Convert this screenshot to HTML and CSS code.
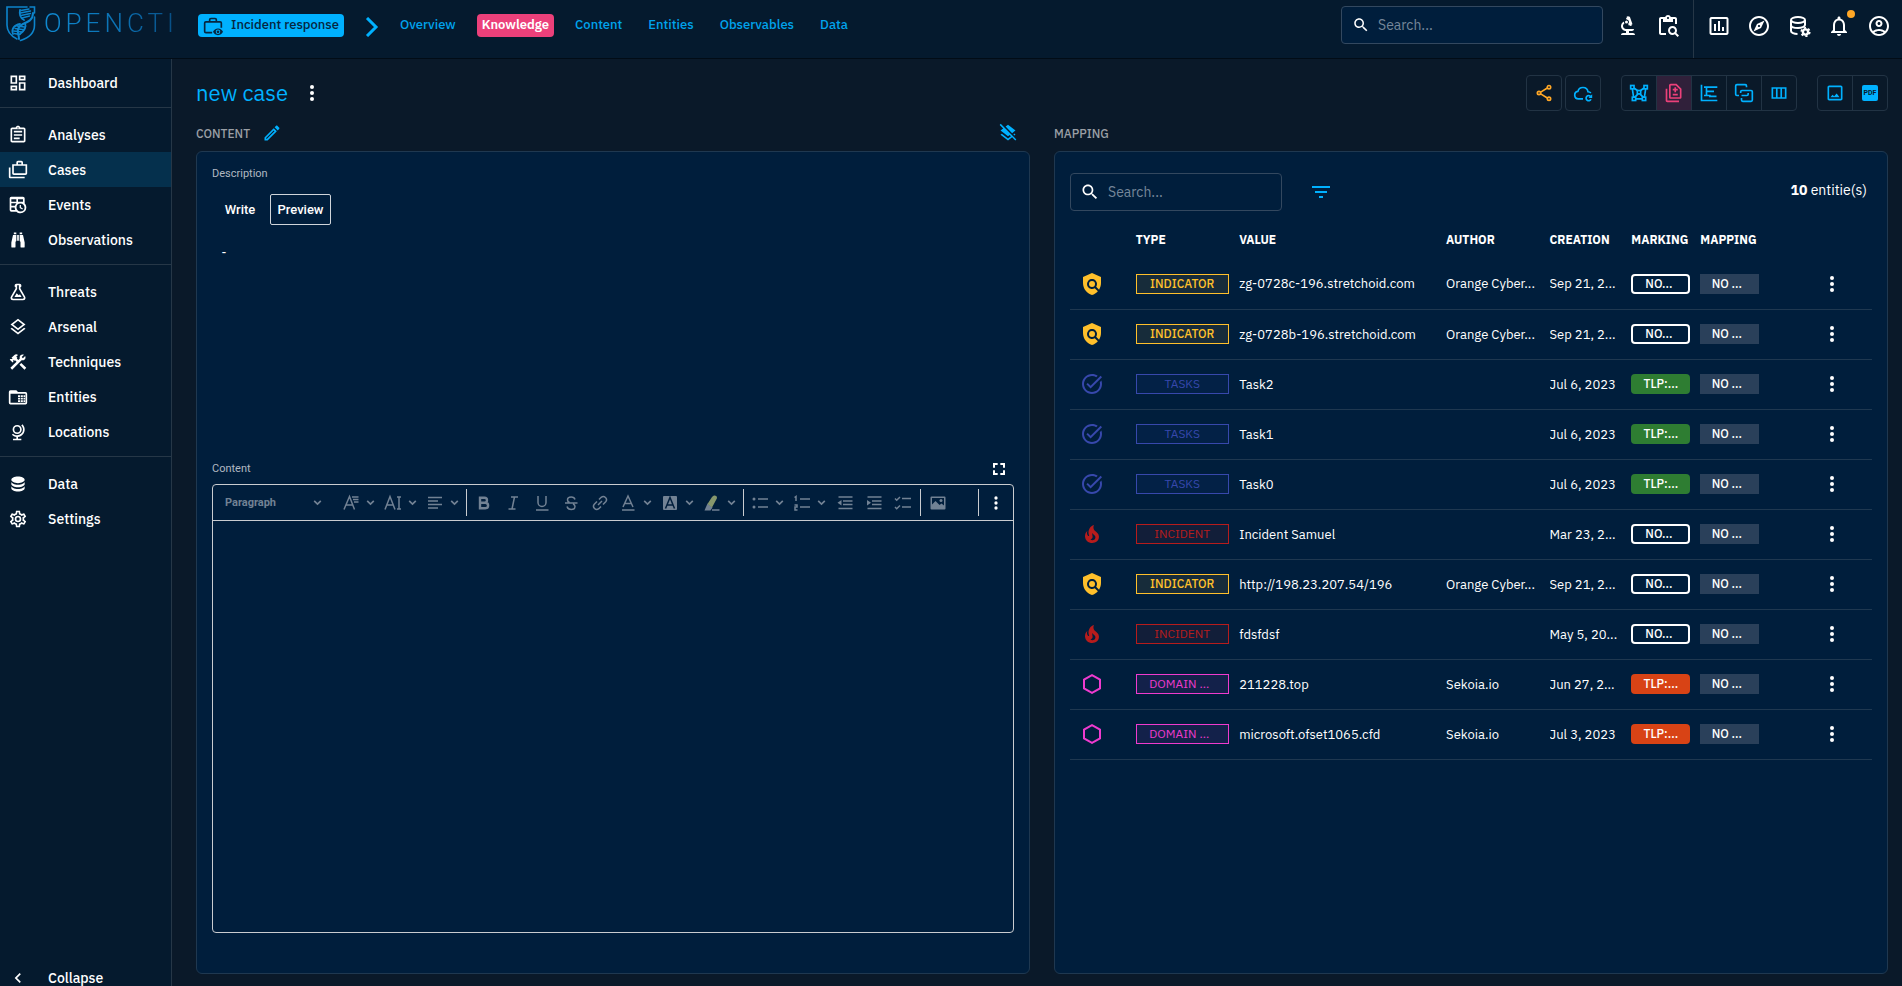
FILE: index.html
```html
<!DOCTYPE html>
<html lang="en">
<head>
<meta charset="utf-8">
<title>new case - OpenCTI</title>
<link rel="stylesheet" href="styles.css">
</head>
<body>
<svg class="sprite" aria-hidden="true">
  <symbol id="dashboard" viewBox="0 0 24 24"><path d="M19 5v2h-4V5h4M9 5v6H5V5h4m10 8v6h-4v-6h4M9 17v2H5v-2h4M21 3h-8v6h8V3zM11 3H3v10h8V3zm10 8h-8v10h8V11zm-10 4H3v6h8v-6z"/></symbol>
  <symbol id="assignment" viewBox="0 0 24 24"><path d="M7 15h7v2H7zm0-4h10v2H7zm0-4h10v2H7z"/><path d="M19 3h-4.18C14.4 1.84 13.3 1 12 1c-1.3 0-2.4.84-2.82 2H5c-1.1 0-2 .9-2 2v14c0 1.1.9 2 2 2h14c1.1 0 2-.9 2-2V5c0-1.1-.9-2-2-2zm-7-.25c.41 0 .75.34.75.75s-.34.75-.75.75-.75-.34-.75-.75.34-.75.75-.75zM19 19H5V5h14v14z"/></symbol>
  <symbol id="cases" viewBox="0 0 24 24"><path d="M3 9H1v11c0 1.11.89 2 2 2h17v-2H3V9z"/><path d="M18 5V3c0-1.1-.9-2-2-2h-4c-1.1 0-2 .9-2 2v2H5v11c0 1.1.9 2 2 2h14c1.1 0 2-.9 2-2V5h-5zm-6-2h4v2h-4V3zm9 13H7V7h14v9z"/></symbol>
  <symbol id="timetable" viewBox="0 0 24 24"><path d="M14,12H15.5V14.82L17.94,16.23L17.19,17.53L14,15.69V12M4,2H18A2,2 0 0,1 20,4V10.1C21.24,11.36 22,13.09 22,15A7,7 0 0,1 15,22C13.09,22 11.36,21.24 10.1,20H4A2,2 0 0,1 2,18V4A2,2 0 0,1 4,2M4,15V18H8.67C8.24,17.09 8,16.07 8,15H4M4,8H10V5H4V8M18,8V5H12V8H18M4,13H8.29C8.63,11.85 9.26,10.82 10.1,10H4V13M15,10.15A4.85,4.85 0 0,0 10.15,15C10.15,17.68 12.32,19.85 15,19.85A4.85,4.85 0 0,0 19.85,15C19.85,12.32 17.68,10.15 15,10.15Z"/></symbol>
  <symbol id="binoculars" viewBox="0 0 24 24"><path d="M11,6H13V13H11V6M9,20A1,1 0 0,1 8,21H5A1,1 0 0,1 4,20V15L6,6H10V13A1,1 0 0,1 9,14V20M10,5H7V3H10V5M15,20V14A1,1 0 0,1 14,13V6H18L20,15V20A1,1 0 0,1 19,21H16A1,1 0 0,1 15,20M14,5V3H17V5H14Z"/></symbol>
  <symbol id="flask" viewBox="0 0 24 24"><path d="M5,19A1,1 0 0,0 6,20H18A1,1 0 0,0 19,19C19,18.79 18.93,18.59 18.82,18.43L13,8.35V4H11V8.35L5.18,18.43C5.07,18.59 5,18.79 5,19M6,22A3,3 0 0,1 3,19C3,18.4 3.18,17.84 3.5,17.37L9,7.81V6A1,1 0 0,1 8,5V4A2,2 0 0,1 10,2H14A2,2 0 0,1 16,4V5A1,1 0 0,1 15,6V7.81L20.5,17.37C20.82,17.84 21,18.4 21,19A3,3 0 0,1 18,22H6M13,16L14.34,14.66L16.27,18H7.73L10.39,13.39L13,16Z"/></symbol>
  <symbol id="layers" viewBox="0 0 24 24"><path d="M11.99 18.54l-7.37-5.73L3 14.07l9 7 9-7-1.63-1.27zM12 16l7.36-5.73L21 9l-9-7-9 7 1.63 1.27L12 16zm0-11.47L17.74 9 12 13.47 6.26 9 12 4.53z"/></symbol>
  <symbol id="tools" viewBox="0 0 24 24"><path d="M13.783 15.172l2.121-2.121 5.996 5.996-2.121 2.121zM17.5 10c1.93 0 3.5-1.57 3.5-3.5 0-.58-.16-1.12-.41-1.6l-2.7 2.7-1.49-1.49 2.7-2.7c-.48-.25-1.02-.41-1.6-.41C15.57 3 14 4.57 14 6.5c0 .41.08.8.21 1.16l-1.85 1.85-1.78-1.78.71-.71-1.41-1.41L12 3.49c-1.17-1.17-3.07-1.17-4.24 0L4.22 7.03l1.41 1.41H2.81l-.71.71 3.54 3.54.71-.71V9.15l1.41 1.41.71-.71 1.78 1.78-7.41 7.41 2.12 2.12L16.34 9.79c.36.13.75.21 1.16.21z"/></symbol>
  <symbol id="folder-table" viewBox="0 0 24 24"><path fill-rule="evenodd" d="M10 4H3a2 2 0 0 0-2 2v13a2 2 0 0 0 2 2h18a2 2 0 0 0 2-2V8a2 2 0 0 0-2-2h-9zM3 8h18v11H3z"/><path d="M12 10h2.500v2H12zM15.300 10h2.500v2h-2.500zM18.600 10h2v2h-2zM12 13h2.500v2H12zM15.300 13h2.500v2h-2.500zM18.600 13h2v2h-2zM12 16h2.500v2H12zM15.300 16h2.500v2h-2.500zM18.600 16h2v2h-2z"/></symbol>
  <symbol id="globe" viewBox="0 0 24 24"><path d="M17.36,2.64L15.95,4.06C17.26,5.37 18,7.14 18,9A7,7 0 0,1 11,16C9.15,16 7.37,15.26 6.06,13.95L4.64,15.36C6.08,16.8 7.97,17.71 10,17.93V20H6V22H16V20H12V17.94C16.55,17.43 20,13.58 20,9C20,6.62 19.05,4.33 17.36,2.64M11,3.5A5.5,5.5 0 0,0 5.5,9A5.5,5.5 0 0,0 11,14.5A5.5,5.5 0 0,0 16.5,9A5.5,5.5 0 0,0 11,3.5M11,5.5C12.94,5.5 14.5,7.07 14.5,9A3.5,3.5 0 0,1 11,12.5A3.5,3.5 0 0,1 7.5,9A3.5,3.5 0 0,1 11,5.5Z"/></symbol>
  <symbol id="database" viewBox="0 0 24 24"><path d="M12,3C7.58,3 4,4.79 4,7C4,9.21 7.58,11 12,11C16.42,11 20,9.21 20,7C20,4.79 16.42,3 12,3M4,9V12C4,14.21 7.58,16 12,16C16.42,16 20,14.21 20,12V9C20,11.21 16.42,13 12,13C7.58,13 4,11.21 4,9M4,14V17C4,19.21 7.58,21 12,21C16.42,21 20,19.21 20,17V14C20,16.21 16.42,18 12,18C7.58,18 4,16.21 4,14Z"/></symbol>
  <symbol id="cog" viewBox="0 0 24 24"><path d="M12,8A4,4 0 0,1 16,12A4,4 0 0,1 12,16A4,4 0 0,1 8,12A4,4 0 0,1 12,8M12,10A2,2 0 0,0 10,12A2,2 0 0,0 12,14A2,2 0 0,0 14,12A2,2 0 0,0 12,10M10,22C9.75,22 9.54,21.82 9.5,21.58L9.13,18.93C8.5,18.68 7.96,18.34 7.44,17.94L4.95,18.95C4.73,19.03 4.46,18.95 4.34,18.73L2.34,15.27C2.21,15.05 2.27,14.78 2.46,14.63L4.57,12.97L4.5,12L4.57,11L2.46,9.37C2.27,9.22 2.21,8.95 2.34,8.73L4.34,5.27C4.46,5.05 4.73,4.96 4.95,5.05L7.44,6.05C7.96,5.66 8.5,5.32 9.13,5.07L9.5,2.42C9.54,2.18 9.75,2 10,2H14C14.25,2 14.46,2.18 14.5,2.42L14.87,5.07C15.5,5.32 16.04,5.66 16.56,6.05L19.05,5.05C19.27,4.96 19.54,5.05 19.66,5.27L21.66,8.73C21.79,8.95 21.73,9.22 21.54,9.37L19.43,11L19.5,12L19.43,13L21.54,14.63C21.73,14.78 21.79,15.05 21.66,15.27L19.66,18.73C19.54,18.95 19.27,19.04 19.05,18.95L16.56,17.95C16.04,18.34 15.5,18.68 14.87,18.93L14.5,21.58C14.46,21.82 14.25,22 14,22H10M11.25,4L10.88,6.61C9.68,6.86 8.62,7.5 7.85,8.39L5.44,7.35L4.69,8.65L6.8,10.2C6.4,11.37 6.4,12.64 6.8,13.8L4.68,15.36L5.43,16.66L7.86,15.62C8.63,16.5 9.68,17.14 10.87,17.38L11.24,20H12.76L13.13,17.39C14.32,17.14 15.37,16.5 16.14,15.62L18.57,16.66L19.32,15.36L17.2,13.81C17.6,12.64 17.6,11.37 17.2,10.2L19.31,8.65L18.56,7.35L16.15,8.39C15.38,7.5 14.32,6.86 13.12,6.62L12.75,4H11.25Z"/></symbol>
  <symbol id="chevron-left" viewBox="0 0 24 24"><path d="M15.41 7.41L14 6l-6 6 6 6 1.41-1.41L10.83 12z"/></symbol>
  <symbol id="search" viewBox="0 0 24 24"><path d="M15.5 14h-.79l-.28-.27C15.41 12.59 16 11.11 16 9.5 16 5.91 13.09 3 9.5 3S3 5.91 3 9.5 5.91 16 9.5 16c1.61 0 3.09-.59 4.23-1.57l.27.28v.79l5 4.99L20.49 19l-4.99-5zm-6 0C7.01 14 5 11.99 5 9.5S7.01 5 9.5 5 14 7.01 14 9.5 11.99 14 9.5 14z"/></symbol>
  <symbol id="biotech" viewBox="0 0 24 24"><path d="M7 19c-1.1 0-2 .9-2 2h14c0-1.1-.9-2-2-2h-4v-2h3c1.1 0 2-.9 2-2h-8c-1.66 0-3-1.34-3-3 0-1.09.59-2.04 1.46-2.56C8.17 9.03 8 8.54 8 8c0-.21.04-.42.09-.62C6.28 8.13 5 9.92 5 12c0 2.76 2.24 5 5 5v2H7z"/><path d="M10.56 5.51C11.91 5.54 13 6.64 13 8c0 .75-.33 1.41-.85 1.87l.59 1.62.94-.34.34.94 1.88-.68-.34-.94.94-.34-2.74-7.52-.94.34-.34-.94-1.88.68.34.94-.94.35.56 1.53z"/><circle cx="10.500" cy="8" r="1.500"/></symbol>
  <symbol id="paste-search" viewBox="0 0 24 24"><path d="M5 5h2v3h10V5h2v5h2V5c0-1.1-.9-2-2-2h-4.180C14.4 1.84 13.3 1 12 1s-2.4.84-2.82 2H5c-1.1 0-2 .9-2 2v14c0 1.1.9 2 2 2h5v-2H5V5zm7-2c.55 0 1 .45 1 1s-.45 1-1 1-1-.45-1-1 .45-1 1-1z"/><path d="M20.3 18.900c.4-.7.7-1.500.7-2.400 0-2.500-2-4.500-4.500-4.500S12 14 12 16.500s2 4.500 4.500 4.500c.9 0 1.700-.3 2.400-.7l2.700 2.700 1.400-1.400-2.700-2.700zm-3.800.1c-1.400 0-2.500-1.100-2.500-2.500s1.100-2.500 2.500-2.500 2.500 1.100 2.500 2.500-1.100 2.500-2.500 2.500z"/></symbol>
  <symbol id="chart" viewBox="0 0 24 24"><path d="M9 17H7v-7h2v7zm4 0h-2V7h2v10zm4 0h-2v-4h2v4zm2.500 2.100h-15V5h15v14.100zm0-16.100h-15c-1.100 0-2 .9-2 2v14c0 1.100.9 2 2 2h15c1.100 0 2-.9 2-2V5c0-1.100-.9-2-2-2z"/></symbol>
  <symbol id="explore" viewBox="0 0 24 24"><path d="M12 2C6.48 2 2 6.48 2 12s4.48 10 10 10 10-4.48 10-10S17.52 2 12 2zm0 18c-4.41 0-8-3.590-8-8s3.590-8 8-8 8 3.590 8 8-3.590 8-8 8zm-5.500-2.500l7.510-3.490L17.500 6.500 9.990 9.990 6.500 17.500zm5.500-6.600c.61 0 1.100.49 1.100 1.100s-.49 1.100-1.100 1.100-1.100-.49-1.100-1.100.49-1.100 1.100-1.100z"/></symbol>
  <symbol id="database-cog" viewBox="0 0 24 24"><g fill="none" stroke="currentColor" stroke-width="2"><ellipse cx="11" cy="6" rx="7" ry="3"/><path d="M4 6v5c0 1.700 3 3 7 3 3.500 0 7-1.200 7-3V6M4 11v6c0 1.700 3 3 6.500 3"/><circle cx="18.500" cy="18" r="2.600" stroke-width="2.400"/><circle cx="18.500" cy="18" r="4.200" stroke-dasharray="2.200 2.200" stroke-width="1.800"/></g></symbol>
  <symbol id="bell" viewBox="0 0 24 24"><path d="M12 22c1.100 0 2-.9 2-2h-4c0 1.100.9 2 2 2zm6-6v-5c0-3.070-1.630-5.640-4.500-6.320V4c0-.83-.67-1.500-1.500-1.500s-1.500.67-1.500 1.500v.68C7.640 5.360 6 7.920 6 11v5l-2 2v1h16v-1l-2-2zm-2 1H8v-6c0-2.480 1.510-4.500 4-4.500s4 2.020 4 4.500v6z"/></symbol>
  <symbol id="account" viewBox="0 0 24 24"><path d="M12 2C6.480 2 2 6.480 2 12s4.480 10 10 10 10-4.480 10-10S17.520 2 12 2zM7.350 18.500C8.660 17.560 10.260 17 12 17s3.340.56 4.650 1.500c-1.310.94-2.910 1.500-4.650 1.500s-3.340-.56-4.650-1.500zm10.790-1.380C16.450 15.800 14.320 15 12 15s-4.450.8-6.140 2.120C4.700 15.730 4 13.950 4 12c0-4.420 3.580-8 8-8s8 3.580 8 8c0 1.950-.7 3.730-1.860 5.120z"/><path d="M12 6c-1.930 0-3.500 1.570-3.500 3.500S10.070 13 12 13s3.500-1.570 3.500-3.500S13.930 6 12 6zm0 5c-.83 0-1.500-.67-1.500-1.500S11.170 8 12 8s1.500.67 1.500 1.500S12.830 11 12 11z"/></symbol>
  <symbol id="more" viewBox="0 0 24 24"><circle cx="12" cy="6" r="2"/><circle cx="12" cy="12" r="2"/><circle cx="12" cy="18" r="2"/></symbol>
  <symbol id="edit" viewBox="0 0 24 24"><path d="M14.060 9.020l.92.92L5.920 19H5v-.92l9.060-9.060M17.660 3c-.25 0-.51.1-.7.29l-1.830 1.830 3.750 3.750 1.830-1.830c.39-.39.39-1.020 0-1.410l-2.340-2.340c-.2-.2-.45-.29-.71-.29zm-3.600 3.190L3 17.250V21h3.750L17.810 9.940l-3.750-3.750z"/></symbol>
  <symbol id="layers-off" viewBox="0 0 24 24"><path d="M19.810 14.990l1.190-.92-1.430-1.430-1.190.92 1.430 1.430zm-.45-4.720L21 9l-9-7-2.910 2.270 7.870 7.880 2.400-1.880zM3.270 1L2 2.270l4.220 4.220L3 9l1.630 1.270L12 16l2.100-1.630 1.430 1.430L12 18.540l-7.370-5.730L3 14.070l9 7 4.950-3.850L20.730 21 22 19.730 3.270 1z"/></symbol>
  <symbol id="share" viewBox="0 0 24 24"><g fill="none" stroke="currentColor" stroke-width="2"><circle cx="18" cy="5" r="2"/><circle cx="6" cy="12" r="2"/><circle cx="18" cy="19" r="2"/><path d="M8 11l8-5M8 13l8 5"/></g></symbol>
  <symbol id="cloud-refresh" viewBox="0 0 24 24"><g fill="none" stroke="currentColor" stroke-width="2"><path d="M12 19H6.500A4.500 4.500 0 0 1 5.900 10.050 6.200 6.200 0 0 1 18 10.500c1.500.1 2.600.6 3.500 1.500"/><path d="M21.300 16.300A3.100 3.100 0 1 0 21.600 19.500"/></g><path d="M23 13.500v4.500h-4.500z"/></symbol>
  <symbol id="graph" viewBox="0 0 24 24"><g fill="none" stroke="currentColor" stroke-width="2"><rect x="2" y="3" width="4" height="4"/><rect x="18" y="3" width="4" height="4"/><rect x="10" y="9" width="4" height="4"/><rect x="4" y="17" width="4" height="4"/><rect x="16" y="17" width="4" height="4"/><path d="M6 6l4 3M18 6l-4 3M4 7l1.500 10M20 7l-1.500 10M8 19h8M11 13l-4 4M13 13l4 4"/></g></symbol>
  <symbol id="difference" viewBox="0 0 24 24"><path d="M18 23H4c-1.100 0-2-.9-2-2V7h2v14h14v2zM14.500 7V5h-2v2h-2v2h2v2h2V9h2V7h-2zm2 6h-6v2h6v-2zM15 1H8c-1.100 0-1.990.9-1.990 2L6 17c0 1.100.89 2 1.990 2H19c1.100 0 2-.9 2-2V7l-6-6zm4 16H8V3h6.170L19 7.830V17z"/></symbol>
  <symbol id="timeline" viewBox="0 0 24 24"><path d="M2 2h2v18h18v2H2zM6 4h16v2H6zM8 6h2v4H8zM8 9h10v2H8zM8 11v3h2v-3zM6 14h8v2H6zM12 15h9v2h-9z"/></symbol>
  <symbol id="correlation" viewBox="0 0 24 24"><g fill="none" stroke="currentColor" stroke-width="2" stroke-linejoin="round"><path d="M6 15H3.500A1.500 1.500 0 0 1 2 13.500v-10A1.500 1.500 0 0 1 3.500 2h10A1.500 1.500 0 0 1 15 3.500V5M12 9h8.500a1.500 1.500 0 0 1 1.500 1.500v10a1.500 1.500 0 0 1-1.500 1.500h-10A1.500 1.500 0 0 1 9 20.500V18M17 12v1.500a1.500 1.500 0 0 1-1.500 1.500H9M8 12v-1.500A1.500 1.500 0 0 1 9.500 9H12"/></g></symbol>
  <symbol id="columns" viewBox="0 0 24 24"><path d="M3 5v14h18V5H3zm5.330 12H5V7h3.330v10zm5.340 0h-3.340V7h3.340v10zM19 17h-3.330V7H19v10z"/></symbol>
  <symbol id="image" viewBox="0 0 24 24"><path d="M19 5v14H5V5h14m0-2H5c-1.100 0-2 .9-2 2v14c0 1.100.9 2 2 2h14c1.100 0 2-.9 2-2V5c0-1.100-.9-2-2-2z"/><path d="M6.500 17l2.500-3 2 1.800 3-3.300 3.500 4.500z"/></symbol>
  <symbol id="policy" viewBox="0 0 24 24"><path d="M21 5l-9-4-9 4v6c0 5.550 3.840 10.740 9 12 2.300-.56 4.330-1.900 5.880-3.710l-3.120-3.120c-1.940 1.290-4.580 1.070-6.290-.64-1.950-1.950-1.950-5.120 0-7.070 1.950-1.950 5.120-1.950 7.070 0 1.710 1.710 1.920 4.350.64 6.290l2.900 2.900C20.290 15.690 21 13.380 21 11V5z"/><circle cx="12" cy="12" r="3"/></symbol>
  <symbol id="task" viewBox="0 0 24 24"><path d="M22 5.180L10.590 16.600l-4.240-4.240 1.410-1.410 2.830 2.830 10-10L22 5.180zm-2.210 5.040c.13.57.21 1.170.21 1.780 0 4.420-3.580 8-8 8s-8-3.580-8-8 3.580-8 8-8c1.580 0 3.040.46 4.280 1.250l1.440-1.440C16.100 2.670 14.130 2 12 2 6.480 2 2 6.480 2 12s4.480 10 10 10 10-4.480 10-10c0-1.190-.22-2.330-.6-3.390l-1.610 1.610z"/></symbol>
  <symbol id="fire" viewBox="0 0 24 24"><path d="M17.66 11.2C17.43 10.9 17.15 10.64 16.89 10.38C16.22 9.78 15.46 9.35 14.82 8.72C13.33 7.26 13 4.85 13.95 3C13 3.23 12.17 3.75 11.46 4.32C8.87 6.4 7.85 10.07 9.07 13.22C9.11 13.32 9.15 13.42 9.15 13.55C9.15 13.77 9 13.97 8.8 14.05C8.57 14.15 8.33 14.09 8.14 13.93C8.08 13.88 8.04 13.83 8 13.76C6.87 12.33 6.69 10.28 7.45 8.64C5.78 10 4.87 12.3 5 14.47C5.06 14.97 5.12 15.47 5.29 15.97C5.43 16.57 5.7 17.17 6 17.7C7.08 19.43 8.95 20.67 10.96 20.92C13.1 21.19 15.39 20.8 17.03 19.32C18.86 17.66 19.5 15 18.56 12.72L18.43 12.46C18.22 12 17.66 11.2 17.66 11.2M14.5 17.5C14.22 17.74 13.76 18 13.4 18.1C12.28 18.5 11.16 17.94 10.5 17.28C11.69 17 12.4 16.12 12.61 15.23C12.78 14.43 12.46 13.77 12.33 13C12.21 12.26 12.23 11.63 12.5 10.94C12.69 11.32 12.89 11.7 13.13 12C13.9 13 15.11 13.44 15.37 14.8C15.41 14.94 15.43 15.08 15.43 15.23C15.46 16.05 15.1 16.95 14.5 17.5Z"/></symbol>
  <symbol id="hexagon" viewBox="0 0 24 24"><path d="M12 3.150l8 4.500v8.700l-8 4.500-8-4.500v-8.700z" fill="none" stroke="currentColor" stroke-width="2"/></symbol>
  <symbol id="filter" viewBox="0 0 24 24"><path d="M10 18h4v-2h-4v2zM3 6v2h18V6H3zm3 7h12v-2H6v2z"/></symbol>
  <symbol id="fullscreen" viewBox="0 0 24 24"><path d="M3 3h7v3H6v4H3zM14 3h7v7h-3V6h-4zM3 14h3v4h4v3H3zM18 14h3v7h-7v-3h4z"/></symbol>
  <symbol id="briefcase-eye" viewBox="0 0 24 24"><g fill="none" stroke="currentColor" stroke-width="2"><path d="M11 20H3.500A1.500 1.500 0 0 1 2 18.500V8.500A1.500 1.500 0 0 1 3.500 7h17A1.500 1.500 0 0 1 22 8.500V14M8 7V4.500A1.500 1.500 0 0 1 9.500 3h5A1.500 1.500 0 0 1 16 4.500V7"/></g><path fill-rule="evenodd" d="M18 15c-2.700 0-5 1.600-6 4 1 2.400 3.300 4 6 4s5-1.600 6-4c-1-2.400-3.300-4-6-4zm0 6.700a2.700 2.700 0 1 1 0-5.400 2.700 2.700 0 0 1 0 5.400z"/><circle cx="18" cy="19" r="1.600"/></symbol>
  <symbol id="caret" viewBox="0 0 10 10"><path d="M2 3.500l3 3 3-3" fill="none" stroke="currentColor" stroke-width="1.500"/></symbol>
  <symbol id="font-family" viewBox="0 0 20 20"><path d="M3 16.500L8.500 3.500l5 13M5 12h7M11 4h6.500M12 6.500h5.500M13 9h4.500" fill="none" stroke="currentColor" stroke-width="1.500"/></symbol>
  <symbol id="font-size" viewBox="0 0 20 20"><path d="M2 16.500L7 3.500l5 13M4 12h6.500M16 4v12M14 4h4M14 16h4" fill="none" stroke="currentColor" stroke-width="1.500"/></symbol>
  <symbol id="align" viewBox="0 0 20 20"><path d="M3 4.500h14M3 8h10M3 11.500h14M3 15h10" fill="none" stroke="currentColor" stroke-width="1.500"/></symbol>
  <symbol id="bold" viewBox="0 0 20 20"><path d="M6 4.700h4.500a2.500 2.500 0 0 1 0 5H6zm0 5h5.300a2.800 2.800 0 0 1 0 5.600H6z" fill="none" stroke="currentColor" stroke-width="2.400"/></symbol>
  <symbol id="italic" viewBox="0 0 20 20"><path d="M8 4h7M5.500 16h7M11.500 4L9 16" fill="none" stroke="currentColor" stroke-width="1.500"/></symbol>
  <symbol id="underline" viewBox="0 0 20 20"><path d="M6 3v6.500a4 4 0 0 0 8 0V3M4 17h12.500" fill="none" stroke="currentColor" stroke-width="1.500"/></symbol>
  <symbol id="strike" viewBox="0 0 20 20"><path d="M14 6.500C13.500 4.500 12 4 10.200 4 8 4 6.500 5 6.500 7c0 1.300.8 2 2 2.500M4 10h12.500M12 11c1.300.5 2 1.300 2 2.500 0 2-1.600 3-3.800 3S6.500 15.500 6 13.500" fill="none" stroke="currentColor" stroke-width="1.500"/></symbol>
  <symbol id="link" viewBox="0 0 20 20"><path d="M8 12l4-4M9 6.500l2.200-2.200a3.200 3.200 0 0 1 4.500 4.500L13 11.500M11 13.500l-2.200 2.200a3.200 3.200 0 0 1-4.500-4.500L7 8.500" fill="none" stroke="currentColor" stroke-width="1.500"/></symbol>
  <symbol id="font-color" viewBox="0 0 20 20"><path d="M5 14l5-11 5 11M6.500 10.500h7M4 17h12.500" fill="none" stroke="currentColor" stroke-width="1.500"/></symbol>
  <symbol id="font-bg" viewBox="0 0 20 20"><rect x="3" y="3" width="14" height="14" rx="1"/><path d="M5.500 15.500L10 4.500l4.500 11M7 12h6" fill="none" stroke="#001e3c" stroke-width="1.500"/></symbol>
  <symbol id="highlight" viewBox="0 0 20 20"><path d="M10 17h7.500" stroke="currentColor" stroke-width="1.500"/><path d="M2.500 17.500l3-7 5 4-2 3z"/><path d="M5.500 11L10 4c1-1.500 3-2 4.200-1s.9 2.300.1 3.600L10 14.500z" fill="#86976c"/></symbol>
  <symbol id="bullets" viewBox="0 0 20 20"><circle cx="4" cy="6" r="1.500"/><circle cx="4" cy="14" r="1.500"/><path d="M8 6h10M8 14h10" stroke="currentColor" stroke-width="1.500"/></symbol>
  <symbol id="numbers" viewBox="0 0 20 20"><path d="M8 6h10M8 14h10M2.500 4.500L4 3.500V8M2.500 12h2.500v2H3v3h2.500" fill="none" stroke="currentColor" stroke-width="1.500"/></symbol>
  <symbol id="outdent" viewBox="0 0 20 20"><path d="M3.500 4h14M8 8h9.500M8 11.500h9.500M3.500 15.500h14" stroke="currentColor" stroke-width="1.500"/><path d="M6.500 7v5.500L2.500 9.700z"/></symbol>
  <symbol id="indent" viewBox="0 0 20 20"><path d="M3.500 4h14M8 8h9.500M8 11.500h9.500M3.500 15.500h14" stroke="currentColor" stroke-width="1.500"/><path d="M3 7v5.500l4-2.800z"/></symbol>
  <symbol id="todo" viewBox="0 0 20 20"><path d="M9 5.500h9M9 14h9M2 5.500l1.700 1.700L7 4M2 14l1.700 1.700L7 12.500" fill="none" stroke="currentColor" stroke-width="1.500"/></symbol>
  <symbol id="picture" viewBox="0 0 20 20"><path fill-rule="evenodd" d="M3.500 3.500h13a1 1 0 0 1 1 1v11a1 1 0 0 1-1 1h-13a1 1 0 0 1-1-1v-11a1 1 0 0 1 1-1zM4 5v6.500L7.500 8l4 4 2-1.500L16 12.500V5z"/><path d="M4 12.500L7.500 9.500l4 3.500 2-1.500L16 14v1.500H4z"/><circle cx="13" cy="7.500" r="1.500"/></symbol>
</svg>

<header class="topbar">
  <a class="logo" href="#" aria-label="OpenCTI">
    <svg class="logo-mark" viewBox="0 0 30 36" aria-hidden="true">
      <g fill="none" stroke="currentColor" stroke-linecap="round">
        <path d="M21 1H1v18c0 6 4 11 10 14" stroke-width="1.600"/>
        <path d="M24 1h4.500v6M28.500 11v8c0 8-6 13-14 15.500" stroke-width="1.600"/>
        <path d="M27 7c0 7-5 9-10 11-4 2-6 5-5 9 .5 2 1 4 1 6" stroke-width="2"/>
        <path d="M14 4c-1 5 0 8 4 10" stroke-width="1.800"/>
        <path d="M19 17c2 5-1 8-5 11" stroke-width="1.800"/>
        <path d="M14 18c-6 1-9 5-7 10" stroke-width="1.800"/>
        <path d="M15 4.500l8-1.500M14.500 7l10-2M15 9.500l9.500-2M16 12l7.500-2M11 20l7.500 1M9 22.500l9 1.200M7.500 25l8.500 1M8 27.500l6 1" stroke-width="1.400"/>
      </g>
    </svg>
    <span class="logo-text">OPENCTI</span>
  </a>
  <nav class="crumbs" aria-label="Incident response">
    <a class="crumb-root" href="#"><svg class="i20"><use href="#briefcase-eye"/></svg><span>Incident response</span></a>
    <svg class="crumb-sep" viewBox="0 0 14 20" aria-hidden="true"><path d="M2 1l9 9-9 9" fill="none" stroke="currentColor" stroke-width="3"/></svg>
    <div class="tabs">
      <a href="#">Overview</a>
      <a class="active" href="#" aria-current="page">Knowledge</a>
      <a href="#">Content</a>
      <a href="#">Entities</a>
      <a href="#">Observables</a>
      <a href="#">Data</a>
    </div>
  </nav>
  <label class="search search-top"><svg class="i20"><use href="#search"/></svg><input type="search" placeholder="Search..." aria-label="Search"></label>
  <div class="top-tools">
    <button aria-label="Advanced search"><svg><use href="#biotech"/></svg></button>
    <button aria-label="Bulk search"><svg><use href="#paste-search"/></svg></button>
  </div>
  <div class="top-account">
    <button aria-label="Dashboards"><svg><use href="#chart"/></svg></button>
    <button aria-label="Investigations"><svg><use href="#explore"/></svg></button>
    <button aria-label="Data import"><svg><use href="#database-cog"/></svg></button>
    <button class="bell" aria-label="Notifications"><svg><use href="#bell"/></svg><span class="dot"></span></button>
    <button aria-label="Profile"><svg><use href="#account"/></svg></button>
  </div>
</header>

<div class="shell">
  <nav class="sidebar" aria-label="Main">
    <div class="side-group">
      <a href="#"><svg><use href="#dashboard"/></svg>Dashboard</a>
    </div>
    <div class="side-group">
      <a href="#"><svg><use href="#assignment"/></svg>Analyses</a>
      <a class="selected" href="#"><svg><use href="#cases"/></svg>Cases</a>
      <a href="#"><svg><use href="#timetable"/></svg>Events</a>
      <a href="#"><svg><use href="#binoculars"/></svg>Observations</a>
    </div>
    <div class="side-group">
      <a href="#"><svg><use href="#flask"/></svg>Threats</a>
      <a href="#"><svg><use href="#layers"/></svg>Arsenal</a>
      <a href="#"><svg><use href="#tools"/></svg>Techniques</a>
      <a href="#"><svg><use href="#folder-table"/></svg>Entities</a>
      <a href="#"><svg><use href="#globe"/></svg>Locations</a>
    </div>
    <div class="side-group">
      <a href="#"><svg><use href="#database"/></svg>Data</a>
      <a href="#"><svg><use href="#cog"/></svg>Settings</a>
    </div>
    <button class="collapse"><svg><use href="#chevron-left"/></svg>Collapse</button>
  </nav>

  <main class="page">
    <div class="page-head">
      <h1>new case</h1>
      <button class="more" aria-label="More actions"><svg><use href="#more"/></svg></button>
      <div class="actions">
        <div class="btn-group"><button class="orange" aria-label="Share"><svg><use href="#share"/></svg></button></div>
        <div class="btn-group"><button aria-label="Enrichment"><svg><use href="#cloud-refresh"/></svg></button></div>
        <div class="btn-group modes">
          <button aria-label="Graph"><svg><use href="#graph"/></svg></button>
          <button class="on" aria-label="Content mapping"><svg><use href="#difference"/></svg></button>
          <button aria-label="Timeline"><svg><use href="#timeline"/></svg></button>
          <button aria-label="Correlation"><svg><use href="#correlation"/></svg></button>
          <button aria-label="Matrix"><svg><use href="#columns"/></svg></button>
        </div>
        <div class="btn-group exports">
          <button aria-label="Export as image"><svg><use href="#image"/></svg></button>
          <button aria-label="Export as PDF"><span class="pdf">PDF</span></button>
        </div>
      </div>
    </div>

    <div class="columns">
      <section class="column">
        <div class="col-head">
          <h2>CONTENT</h2>
          <button aria-label="Edit"><svg class="i20"><use href="#edit"/></svg></button>
          <button class="end" aria-label="Clear mapping"><svg class="i20"><use href="#layers-off"/></svg></button>
        </div>
        <div class="panel">
          <div class="desc">
            <h3>Description</h3>
            <div class="md-tabs">
              <button>Write</button>
              <button class="active">Preview</button>
            </div>
            <p>-</p>
          </div>
          <div class="editor-head">
            <label for="body">Content</label>
            <button aria-label="Full screen"><svg><use href="#fullscreen"/></svg></button>
          </div>
          <div class="editor">
            <div class="toolbar">
              <button class="heading">Paragraph<svg class="caret"><use href="#caret"/></svg></button>
              <button class="drop" aria-label="Font family"><svg><use href="#font-family"/></svg><svg class="caret"><use href="#caret"/></svg></button>
              <button class="drop" aria-label="Font size"><svg><use href="#font-size"/></svg><svg class="caret"><use href="#caret"/></svg></button>
              <button class="drop" aria-label="Alignment"><svg><use href="#align"/></svg><svg class="caret"><use href="#caret"/></svg></button>
              <span class="sep"></span>
              <button aria-label="Bold"><svg><use href="#bold"/></svg></button>
              <button aria-label="Italic"><svg><use href="#italic"/></svg></button>
              <button aria-label="Underline"><svg><use href="#underline"/></svg></button>
              <button aria-label="Strikethrough"><svg><use href="#strike"/></svg></button>
              <button aria-label="Link"><svg><use href="#link"/></svg></button>
              <button class="drop" aria-label="Font color"><svg><use href="#font-color"/></svg><svg class="caret"><use href="#caret"/></svg></button>
              <button class="drop" aria-label="Font background"><svg><use href="#font-bg"/></svg><svg class="caret"><use href="#caret"/></svg></button>
              <button class="drop" aria-label="Highlight"><svg><use href="#highlight"/></svg><svg class="caret"><use href="#caret"/></svg></button>
              <span class="sep"></span>
              <button class="drop" aria-label="Bulleted list"><svg><use href="#bullets"/></svg><svg class="caret"><use href="#caret"/></svg></button>
              <button class="drop" aria-label="Numbered list"><svg><use href="#numbers"/></svg><svg class="caret"><use href="#caret"/></svg></button>
              <button aria-label="Decrease indent"><svg><use href="#outdent"/></svg></button>
              <button aria-label="Increase indent"><svg><use href="#indent"/></svg></button>
              <button aria-label="To-do list"><svg><use href="#todo"/></svg></button>
              <span class="sep"></span>
              <button aria-label="Insert image"><svg><use href="#picture"/></svg></button>
              <span class="sep last"></span>
              <button class="overflow" aria-label="Show more items"><svg><use href="#more"/></svg></button>
            </div>
            <textarea id="body"></textarea>
          </div>
        </div>
      </section>

      <section class="column">
        <div class="col-head"><h2>MAPPING</h2></div>
        <div class="panel">
          <div class="list-head">
            <label class="search search-list"><svg class="i20"><use href="#search"/></svg><input type="search" placeholder="Search..." aria-label="Search entities"></label>
            <button class="filter" aria-label="Filters"><svg><use href="#filter"/></svg></button>
            <span class="count"><b>10</b> entitie(s)</span>
          </div>
          <table>
            <colgroup><col class="c-icon"><col class="c-type"><col class="c-value"><col class="c-author"><col class="c-date"><col class="c-chip"><col class="c-chip"><col></colgroup>
            <thead>
              <tr><th></th><th>TYPE</th><th>VALUE</th><th>AUTHOR</th><th>CREATION</th><th>MARKING</th><th>MAPPING</th><th></th></tr>
            </thead>
            <tbody>
              <tr class="indicator"><td><svg><use href="#policy"/></svg></td><td><span class="type">INDICATOR</span></td><td>zg-0728c-196.stretchoid.com</td><td>Orange Cyber...</td><td>Sep 21, 2...</td><td><span class="mark none">NO...</span></td><td><span class="map">NO ...</span></td><td><button aria-label="Row actions"><svg><use href="#more"/></svg></button></td></tr>
              <tr class="indicator"><td><svg><use href="#policy"/></svg></td><td><span class="type">INDICATOR</span></td><td>zg-0728b-196.stretchoid.com</td><td>Orange Cyber...</td><td>Sep 21, 2...</td><td><span class="mark none">NO...</span></td><td><span class="map">NO ...</span></td><td><button aria-label="Row actions"><svg><use href="#more"/></svg></button></td></tr>
              <tr class="tasks"><td><svg><use href="#task"/></svg></td><td><span class="type">TASKS</span></td><td>Task2</td><td></td><td>Jul 6, 2023</td><td><span class="mark green">TLP:...</span></td><td><span class="map">NO ...</span></td><td><button aria-label="Row actions"><svg><use href="#more"/></svg></button></td></tr>
              <tr class="tasks"><td><svg><use href="#task"/></svg></td><td><span class="type">TASKS</span></td><td>Task1</td><td></td><td>Jul 6, 2023</td><td><span class="mark green">TLP:...</span></td><td><span class="map">NO ...</span></td><td><button aria-label="Row actions"><svg><use href="#more"/></svg></button></td></tr>
              <tr class="tasks"><td><svg><use href="#task"/></svg></td><td><span class="type">TASKS</span></td><td>Task0</td><td></td><td>Jul 6, 2023</td><td><span class="mark green">TLP:...</span></td><td><span class="map">NO ...</span></td><td><button aria-label="Row actions"><svg><use href="#more"/></svg></button></td></tr>
              <tr class="incident"><td><svg><use href="#fire"/></svg></td><td><span class="type">INCIDENT</span></td><td>Incident Samuel</td><td></td><td>Mar 23, 2...</td><td><span class="mark none">NO...</span></td><td><span class="map">NO ...</span></td><td><button aria-label="Row actions"><svg><use href="#more"/></svg></button></td></tr>
              <tr class="indicator"><td><svg><use href="#policy"/></svg></td><td><span class="type">INDICATOR</span></td><td>http://198.23.207.54/196</td><td>Orange Cyber...</td><td>Sep 21, 2...</td><td><span class="mark none">NO...</span></td><td><span class="map">NO ...</span></td><td><button aria-label="Row actions"><svg><use href="#more"/></svg></button></td></tr>
              <tr class="incident"><td><svg><use href="#fire"/></svg></td><td><span class="type">INCIDENT</span></td><td>fdsfdsf</td><td></td><td>May 5, 20...</td><td><span class="mark none">NO...</span></td><td><span class="map">NO ...</span></td><td><button aria-label="Row actions"><svg><use href="#more"/></svg></button></td></tr>
              <tr class="domain"><td><svg><use href="#hexagon"/></svg></td><td><span class="type">DOMAIN ...</span></td><td>211228.top</td><td>Sekoia.io</td><td>Jun 27, 2...</td><td><span class="mark red">TLP:...</span></td><td><span class="map">NO ...</span></td><td><button aria-label="Row actions"><svg><use href="#more"/></svg></button></td></tr>
              <tr class="domain"><td><svg><use href="#hexagon"/></svg></td><td><span class="type">DOMAIN ...</span></td><td>microsoft.ofset1065.cfd</td><td>Sekoia.io</td><td>Jul 3, 2023</td><td><span class="mark red">TLP:...</span></td><td><span class="map">NO ...</span></td><td><button aria-label="Row actions"><svg><use href="#more"/></svg></button></td></tr>
            </tbody>
          </table>
        </div>
      </section>
    </div>
  </main>
</div>
</body>
</html>
```
FILE: styles.css
```css
:root {
  --bg: #0a1929;
  --nav: #051a2e;
  --paper: #001e3c;
  --line: #1f3850;
  --nav-line: #263747;
  --primary: #00b1ff;
  --pink: #ec407a;
}

* { box-sizing: border-box; }

body {
  margin: 0;
  height: 100vh;
  display: flex;
  flex-direction: column;
  overflow: hidden;
  background: var(--bg);
  color: #fff;
  font-family: "IBM Plex Sans", Roboto, sans-serif;
  font-size: 13px;
}

h1, h2, h3, p { margin: 0; font-weight: 400; }
a { color: inherit; text-decoration: none; }
button { padding: 0; border: 0; background: none; color: inherit; font: inherit; display: flex; align-items: center; justify-content: center; }
input, textarea { border: 0; outline: 0; background: none; color: inherit; font: inherit; }
svg { width: 24px; height: 24px; fill: currentColor; flex: none; display: block; }
.sprite { position: absolute; width: 0; height: 0; }
.i20 { width: 20px; height: 20px; }

/* Top bar */
.topbar {
  display: flex;
  flex: none;
  height: 59px;
  background: var(--nav);
  border-bottom: 1px solid #020c16;
  align-items: flex-start;
}
.logo { width: 198px; padding: 6px 0 0 6px; display: flex; gap: 8px; }
.logo-mark { width: 30px; height: 36px; color: #0d84cc; }
.logo-text {
  font: 300 26px/34px Roboto, sans-serif;
  letter-spacing: 4px;
  background: linear-gradient(90deg, #0f8ad2, #0b6fb0 60%, #084b80);
  background-clip: text;
  -webkit-background-clip: text;
  color: transparent;
}
.crumbs { display: flex; align-items: center; height: 23px; margin-top: 14px; font-weight: 500; line-height: 21px; }
.crumb-root {
  display: flex; gap: 8px; width: 146px; height: 23px; padding-left: 5px;
  border-radius: 4px; background: var(--primary); color: #06263f; white-space: nowrap;
}
.crumb-root svg { margin-top: 2px; }
.crumb-sep { width: 14px; height: 20px; margin: 2px 16px 0 21px; color: var(--primary); }
.tabs { display: flex; gap: 16px; color: #00a3ec; }
.tabs a { padding: 0 5px; height: 23px; border-radius: 4px; }
.tabs .active { background: var(--pink); color: #fff; font-weight: 600; }

.search { display: flex; align-items: center; height: 38px; border: 1px solid #33485f; border-radius: 4px; background: var(--paper); padding: 0 10px; }
.search input { flex: 1; min-width: 0; padding: 0; font-size: 14px; }
.search input::placeholder { color: #76879a; opacity: 1; }
.search-top { width: 262px; margin: 6px 13px 0 auto; gap: 8px; }
.search-top svg { width: 18px; height: 18px; }
.top-tools, .top-account { display: flex; height: 58px; padding-bottom: 6px; align-items: center; }
.top-tools { gap: 16px; padding-right: 13px; }
.top-account { gap: 16px; padding: 0 11px 6px 13px; border-left: 1px solid var(--nav-line); }
.bell { position: relative; }
.dot { position: absolute; top: -4px; right: -4px; width: 8px; height: 8px; border-radius: 50%; background: #ffa726; }

/* Side bar */
.shell { flex: 1; min-height: 0; display: flex; }
.sidebar { width: 172px; flex: none; display: flex; flex-direction: column; background: var(--nav); border-right: 1px solid var(--nav-line); font-size: 14px; font-weight: 500; }
.side-group { padding: 9px 0 7px; border-bottom: 1px solid var(--nav-line); }
.side-group:first-child { padding-top: 6px; }
.side-group:last-of-type { border-bottom: 0; }
.side-group a { display: flex; align-items: center; height: 35px; }
.sidebar svg { width: 20px; height: 20px; margin: 0 20px 0 8px; }
.side-group .selected { background: #05304d; }
.collapse { margin-top: auto; height: 17px; justify-content: flex-start; }

/* Page */
.page { flex: 1; min-width: 0; display: flex; flex-direction: column; padding: 15px 14px 12px 24px; }
.page-head { display: flex; align-items: center; height: 37px; }
h1 { font-size: 22px; line-height: 36px; color: var(--primary); }
.more { margin-left: 12px; }
.actions { margin-left: auto; display: flex; gap: 3px; }
.btn-group { display: flex; height: 36px; border: 1px solid #223344; border-radius: 4px; overflow: hidden; color: var(--primary); }
.btn-group button { width: 34px; }
.btn-group button + button { width: 35px; border-left: 1px solid #223344; }
.btn-group svg { width: 20px; height: 20px; }
.modes, .exports { margin-left: 17px; }
.orange { color: #ffa726; }
.btn-group .on { background: #30203a; color: var(--pink); }
.pdf { width: 16px; border-radius: 2px; background: var(--primary); color: var(--bg); font: 700 7px/16px Roboto, sans-serif; text-align: center; }

.columns { flex: 1; min-height: 0; display: grid; grid-template-columns: 1fr 1fr; gap: 24px; }
.column { display: flex; flex-direction: column; min-width: 0; }
.col-head { display: flex; align-items: center; height: 40px; padding-top: 4px; color: var(--primary); }
h2 { font-size: 12px; font-weight: 500; color: #9a9fa5; margin-right: 12px; }
.end { margin-left: auto; margin-right: 12px; }
.panel { flex: 1; min-height: 0; display: flex; flex-direction: column; padding: 15px; border: 1px solid var(--line); border-radius: 6px; background: var(--paper); }

/* Content panel */
.desc { flex: none; height: 291px; font-family: Roboto, sans-serif; }
h3, .editor-head label { font: 400 11px/14px Roboto, sans-serif; color: #b0b8c1; }
.md-tabs { display: flex; gap: 2px; margin-top: 13px; font-size: 13px; font-weight: 500; }
.md-tabs button { width: 56px; height: 31px; border: 1px solid transparent; border-radius: 2px; }
.md-tabs .active { width: 61px; border-color: #d0d5da; }
.desc p { padding: 17px 10px; font-size: 14px; line-height: 20px; }
.editor-head { display: flex; justify-content: space-between; align-items: center; height: 26px; padding: 0 7px 4px 0; }
.editor-head svg { width: 16px; height: 16px; }
.editor { flex: 1; min-height: 0; margin-bottom: 25px; display: flex; flex-direction: column; border: 1px solid #c9ccd0; border-radius: 4px; }
.toolbar { display: flex; align-items: center; height: 36px; padding: 0 3px; border-bottom: 1px solid #c9ccd0; color: #728294; }
.toolbar button { width: 29px; height: 28px; flex: none; }
.toolbar svg { width: 20px; height: 20px; }
.toolbar .caret { width: 11px; height: 11px; }
.toolbar .drop { width: 42px; justify-content: flex-start; padding-left: 4px; gap: 4px; }
.toolbar .heading { width: 121px; justify-content: space-between; padding: 0 14px 0 9px; font: 700 11px/14px Roboto, sans-serif; }
.sep { width: 1px; height: 27px; margin: 0 2px 0 3px; background: #c9ccd0; flex: none; }
.last { margin-left: auto; }
.toolbar .overflow { color: #fff; }
textarea { flex: 1; resize: none; padding: 10px; }

/* Mapping panel */
.list-head { display: flex; align-items: center; margin-top: 6px; height: 38px; flex: none; }
.search-list { width: 212px; gap: 8px; padding: 0 9px; }
.filter { margin-left: 27px; color: var(--primary); }
.count { margin: 0 5px 4px auto; font-size: 14px; }
table { width: 100%; margin-top: 8px; border-collapse: collapse; table-layout: fixed; }
.c-icon { width: 8.2%; }
.c-type { width: 12.9%; }
.c-value { width: 25.8%; }
.c-author { width: 12.9%; }
.c-date { width: 10.2%; }
.c-chip { width: 8.6%; }
th { height: 40px; padding: 0; text-align: left; font-size: 12px; font-weight: 700; }
td { height: 50px; padding: 0; border-bottom: 1px solid var(--line); white-space: nowrap; overflow: hidden; }
td:first-child { padding-left: 10px; }
td:last-child { padding-left: 51px; }
.type, .mark, .map { display: block; height: 20px; line-height: 20px; font-size: 12px; text-align: center; }
.type { width: 93px; border: 1px solid; line-height: 18px; }
.mark { width: 59px; border-radius: 4px; font-weight: 500; }
.map { width: 59px; background: #2a405a; font-weight: 500; padding-right: 6px; }
.none { border: 2px solid #fff; line-height: 16px; padding-right: 4px; }
.green { background: #2e7d32; }
.red { background: #d84315; }
.indicator td:first-child, .indicator .type { color: #ffc02b; }
.indicator .type { background: #172c3a; font-weight: 500; }
.tasks td:first-child, .tasks .type { color: #3748ac; }
.tasks .type { background: #032146; }
.incident td:first-child, .incident .type { color: #b71c1c; }
.incident .type { background: #121e39; }
.domain td:first-child, .domain .type { color: #ef3bce; }
.domain .type { background: #13214a; padding-right: 6px; }
```
